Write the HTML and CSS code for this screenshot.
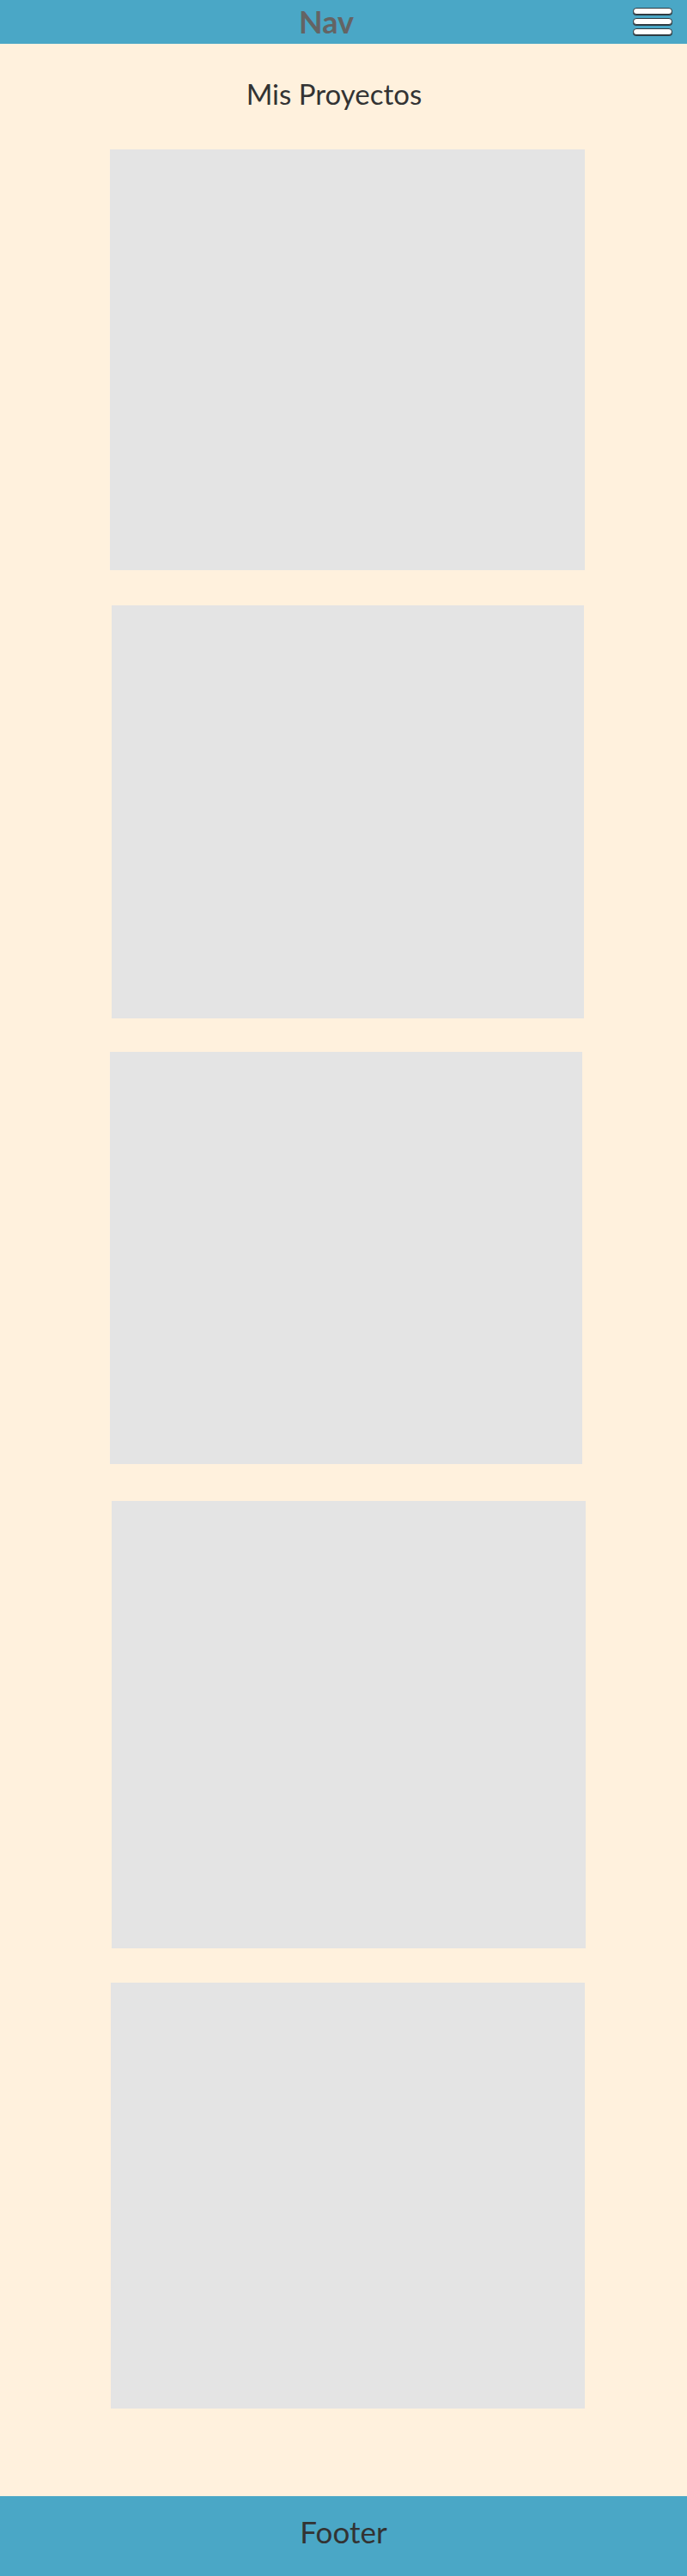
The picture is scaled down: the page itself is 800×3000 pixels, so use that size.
FILE: index.html
```html
<!DOCTYPE html>
<html lang="es">
<head>
<meta charset="utf-8">
<title>Mis Proyectos</title>
<link rel="stylesheet" href="styles.css">
</head>
<body>
<nav class="nav">
  <span class="nav-title">Nav</span>
  <button class="menu" aria-label="Menú">
    <span class="bar"></span>
    <span class="bar"></span>
    <span class="bar"></span>
  </button>
</nav>
<main class="main">
  <h1 class="title">Mis Proyectos</h1>
  <section class="projects">
    <div class="project p1"></div>
    <div class="project p2"></div>
    <div class="project p3"></div>
    <div class="project p4"></div>
    <div class="project p5"></div>
  </section>
</main>
<footer class="footer">Footer</footer>
</body>
</html>
```

FILE: styles.css
```css
* { box-sizing: border-box; }

html, body {
  margin: 0;
  padding: 0;
}

body {
  background: #fff1dd;
  font-family: Lato, "Liberation Sans", sans-serif;
}

.nav {
  position: relative;
  height: 51px;
  background: #4aa7c6;
  display: flex;
  justify-content: center;
  padding-right: 40px;
}

.nav-title {
  font-weight: 700;
  font-size: 36px;
  line-height: 50px;
  color: #646464;
}

.menu {
  position: absolute;
  right: 17px;
  top: 9px;
  width: 46px;
  padding: 0;
  margin: 0;
  border: 0;
  background: transparent;
  display: flex;
  flex-direction: column;
  gap: 4px;
}

.bar {
  display: block;
  height: 8px;
  background: #ffffff;
  border: 1px solid #2e3b42;
  border-radius: 5px;
  box-shadow: 0 1px 0 #2e3b42;
}

.main {
  display: flex;
  flex-direction: column;
}

.title {
  margin: 39px 0 0;
  padding-right: 22px;
  text-align: center;
  font-weight: 400;
  font-size: 33px;
  line-height: 38px;
  color: #333333;
}

.projects {
  display: flex;
  flex-direction: column;
  margin-top: 46px;
}

.project {
  background: #e4e4e4;
}

.p1 { margin-left: 128px; width: 553px; height: 490px; }
.p2 { margin-left: 130px; width: 550px; height: 481px; margin-top: 41px; }
.p3 { margin-left: 128px; width: 550px; height: 480px; margin-top: 39px; }
.p4 { margin-left: 130px; width: 552px; height: 521px; margin-top: 43px; }
.p5 { margin-left: 129px; width: 552px; height: 496px; margin-top: 40px; }

.footer {
  margin-top: 102px;
  height: 93px;
  background: #4aa7c6;
  text-align: center;
  font-size: 35px;
  line-height: 42px;
  padding-top: 20px;
  color: #333333;
}
```
